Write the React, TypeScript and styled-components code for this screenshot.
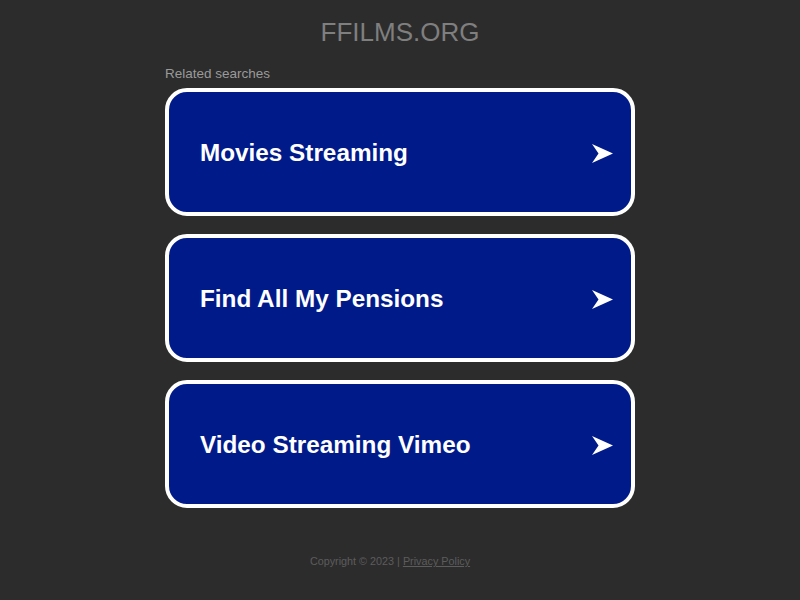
import styled, { createGlobalStyle } from 'styled-components';

const GlobalStyle = createGlobalStyle`
  html, body {
    margin: 0;
    padding: 0;
    background: #2c2c2c;
    font-family: 'Liberation Sans', Arial, sans-serif;
  }
`;

const searches = ['Movies Streaming', 'Find All My Pensions', 'Video Streaming Vimeo'];

const Arrow = () => (
  <svg width="21" height="19" viewBox="0 0 21 19" aria-hidden="true">
    <path d="M0 0 L21 9.5 L0 19 L6.5 9.5 Z" fill="#ffffff" />
  </svg>
);

const App = () => (
  <>
    <GlobalStyle />
    <Page>
      <Title>FFILMS.ORG</Title>
      <Main>
        <Label>Related searches</Label>
        <List>
          {searches.map((s) => (
            <Card key={s} href="#">
              <CardText>{s}</CardText>
              <Arrow />
            </Card>
          ))}
        </List>
      </Main>
      <Footer>
        Copyright © 2023 | <FooterLink href="#">Privacy Policy</FooterLink>
      </Footer>
    </Page>
  </>
);

export default App;

const Page = styled.div`
  min-height: 100vh;
  box-sizing: border-box;
  padding-top: 17px;
  display: flex;
  flex-direction: column;
  align-items: center;
`;

const Title = styled.h1`
  margin: 0;
  font-size: 26px;
  line-height: 30px;
  font-weight: 400;
  color: #7f7f7f;
  text-align: center;
`;

const Main = styled.main`
  width: 470px;
  margin-top: 19px;
`;

const Label = styled.div`
  font-size: 13.5px;
  line-height: 16px;
  color: #9a9a9a;
  margin-bottom: 6px;
`;

const List = styled.div`
  display: flex;
  flex-direction: column;
  gap: 18px;
`;

const Card = styled.a`
  box-sizing: border-box;
  height: 128px;
  display: flex;
  align-items: center;
  justify-content: space-between;
  padding: 2px 18px 0 31px;
  border: 4px solid #ffffff;
  border-radius: 22px;
  background: #001a8a;
  text-decoration: none;
`;

const CardText = styled.span`
  font-size: 24.3px;
  font-weight: 700;
  color: #ffffff;
`;

const Footer = styled.footer`
  margin-top: 47px;
  margin-right: 20px;
  font-size: 10.8px;
  line-height: 13px;
  color: #5c5c5c;
`;

const FooterLink = styled.a`
  color: #5c5c5c;
  text-decoration: underline;
`;
